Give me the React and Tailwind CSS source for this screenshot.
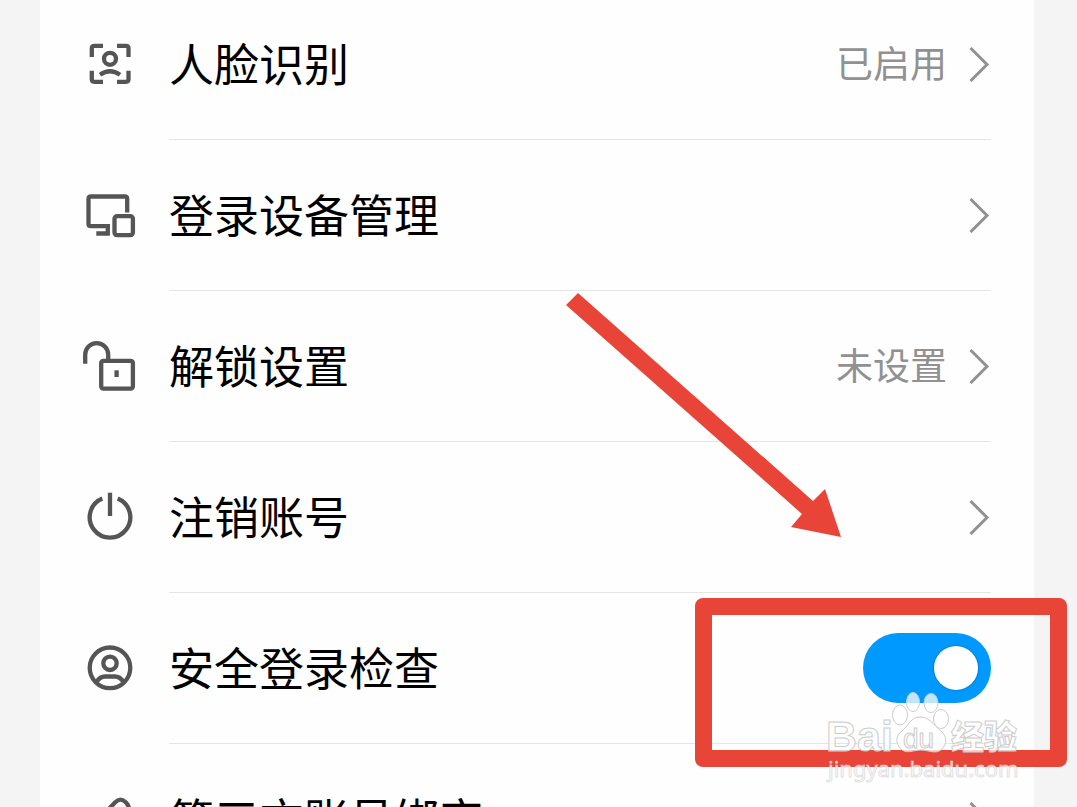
import { useState } from "react";

const iconProps = {
  className: "w-[52px] h-[52px] shrink-0 overflow-visible text-[#555555]",
  viewBox: "0 1 52 52",
  fill: "none",
  stroke: "currentColor",
  strokeWidth: "4.3",
  "aria-hidden": true,
};

const rows = [
  {
    label: "人脸识别",
    value: "已启用",
    icon: (
      <svg {...iconProps}>
        <path d="M7.8 19V10.3Q7.8 7.8 10.3 7.8H19M33 7.8H42Q44.5 7.8 44.5 10.3V19M44.5 32.8V41.3Q44.5 43.8 42 43.8H33M19 43.8H10.3Q7.8 43.8 7.8 41.3V32.8" />
        <circle cx="26" cy="20.8" r="6" />
        <path d="M16 36.8Q26 29.8 36 36.8" />
      </svg>
    ),
  },
  {
    label: "登录设备管理",
    icon: (
      <svg {...iconProps}>
        <path d="M43.2 23.6V10Q43.2 7.5 40.7 7.5H7Q4.5 7.5 4.5 10V34.7Q4.5 37.2 7 37.2H26" />
        <path d="M12.3 44.5H23.8V37.2" />
        <rect x="30.5" y="27.2" width="18.4" height="18.9" rx="2.5" />
      </svg>
    ),
  },
  {
    label: "解锁设置",
    value: "未设置",
    icon: (
      <svg {...iconProps}>
        <path d="M1.2 23.7V14.7A11.5 11.5 0 0 1 24.2 14.7V20" />
        <rect x="17.2" y="20.9" width="31.7" height="27.7" rx="2" />
        <path d="M32.6 30.3V37" />
      </svg>
    ),
  },
  {
    label: "注销账号",
    icon: (
      <svg {...iconProps}>
        <path d="M18.3 7.5A20.3 20.3 0 1 0 33.7 7.5" />
        <path d="M26 1.7V25" />
      </svg>
    ),
  },
  {
    label: "安全登录检查",
    toggle: true,
    icon: (
      <svg {...iconProps}>
        <circle cx="26" cy="25.8" r="20.3" />
        <circle cx="26" cy="21.3" r="6.7" />
        <path d="M12.5 40Q16 34.5 21 34.5H31Q36 34.5 39.5 40" />
      </svg>
    ),
  },
  {
    label: "第三方账号绑定",
    icon: (
      <svg {...iconProps}>
        <path d="M21 20L31 9.5Q36.5 3.8 42 9.5Q47.5 15.5 42 21L34 29Q28.5 34 23 29" />
        <path d="M31 32L21 42.5Q15.5 48 10 42.5Q4.5 36.5 10 31L18 23Q23.5 18 29 23" />
      </svg>
    ),
  },
];

function Chevron() {
  return (
    <svg
      className="w-[22px] h-9 shrink-0"
      viewBox="0 0 22 36"
      fill="none"
      stroke="#919191"
      strokeWidth="3"
      aria-hidden="true"
    >
      <path d="M1.5 2L18 18.5L1.5 35" />
    </svg>
  );
}

function Row({ row }) {
  const [checked, setChecked] = useState(true);

  const body = (
    <>
      {row.icon}
      <div className="flex flex-1 items-center gap-[22px] h-[151px] border-b border-[#e5e5e5]">
        <span className="flex-1 pb-1 text-[45px] leading-none text-black">
          {row.label}
        </span>
        {row.value && (
          <span className="pb-1 text-[37px] leading-none text-[#919191]">
            {row.value}
          </span>
        )}
        {row.toggle ? (
          <input
            type="checkbox"
            role="switch"
            checked={checked}
            onChange={(e) => setChecked(e.target.checked)}
            className="flex items-center w-32 h-[70px] px-[13px] appearance-none rounded-full bg-[#cccccc] checked:justify-end checked:bg-[#0099ff] before:block before:size-11 before:rounded-full before:bg-white before:shadow-[0_0_3px_rgba(0,0,0,0.3)]"
          />
        ) : (
          <Chevron />
        )}
      </div>
    </>
  );

  const rowClass = "flex items-center gap-[33px] pl-11 pr-[43px]";

  return (
    <li>
      {row.toggle ? (
        <label className={rowClass}>{body}</label>
      ) : (
        <a href="#" className={rowClass}>
          {body}
        </a>
      )}
    </li>
  );
}

function Watermark() {
  return (
    <svg
      className="absolute top-[688px] right-[53px] w-[204px] h-[100px]"
      viewBox="820 688 204 100"
      fill="#ffffff"
      fillOpacity="0.75"
      stroke="#cccccc"
      strokeWidth="1"
      aria-hidden="true"
    >
      <text x="826" y="751" className="font-['Liberation_Sans',sans-serif] text-[43px] font-bold">
        Bai
      </text>
      <ellipse cx="900" cy="715" rx="7.5" ry="10" />
      <ellipse cx="913" cy="702" rx="6.5" ry="9.5" />
      <ellipse cx="931" cy="703" rx="7" ry="9.5" />
      <ellipse cx="941" cy="719" rx="7.5" ry="9.5" />
      <path d="M920 717C911 717 909 725 902 731C895 736 896 743 900 748C906 755 913 750 921 750C929 750 936 755 942 749C947 744 947 736 941 731C933 725 930 717 920 717Z" />
      <text x="903" y="748" className="font-['Liberation_Sans',sans-serif] text-[28px]">
        du
      </text>
      <text x="951" y="749" className="font-['Noto_Sans_CJK_SC',sans-serif] text-[33px] font-black">
        经验
      </text>
      <text x="828" y="777" className="font-['Noto_Sans',sans-serif] text-[22px]" strokeOpacity="0.6">
        jingyan.baidu.com
      </text>
    </svg>
  );
}

export default function App() {
  return (
    <div className="relative h-screen overflow-hidden bg-[#f4f4f4] font-['Noto_Sans_CJK_SC',sans-serif]">
      <main className="ml-10 mr-[43px] bg-[#fefefe]">
        <ul className="-mt-[11px]">
          {rows.map((row) => (
            <Row key={row.label} row={row} />
          ))}
        </ul>
      </main>

      {/* Callouts drawn over the list */}
      <div className="pointer-events-none">
        <svg
          className="absolute top-[290px] right-[233px] w-[280px] h-[250px]"
          viewBox="564 290 280 250"
          aria-hidden="true"
        >
          <path
            d="M578 293L813 501L825 489L841 537L791 527L802 514L566 305Z"
            fill="#e84438"
          />
        </svg>
        <div className="absolute top-[598px] right-[10px] w-[372px] h-[169px] rounded-lg border-[17px] border-[#e84438]" />
        <Watermark />
      </div>
    </div>
  );
}
